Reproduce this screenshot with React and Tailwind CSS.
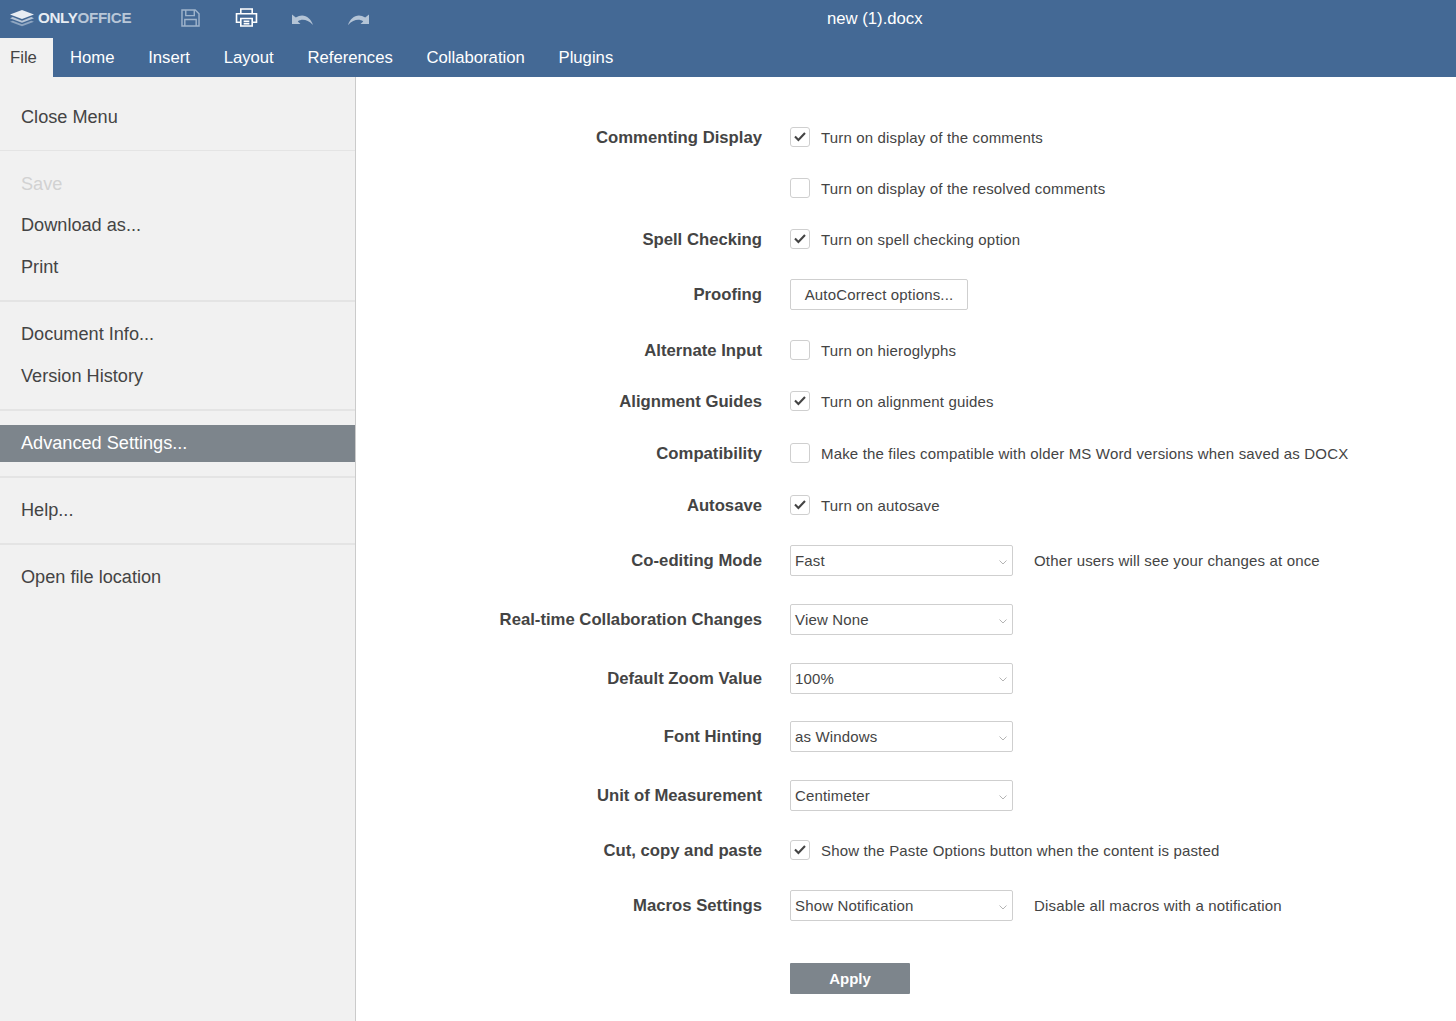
import React from 'react';

const font = { fontFamily: '"Liberation Sans", Arial, sans-serif' };

const tabs = ['Home', 'Insert', 'Layout', 'References', 'Collaboration', 'Plugins'];

const CheckBox = ({ checked }) => (
  <span className="mb-[1px] flex h-5 w-5 shrink-0 items-center justify-center rounded-[3px] border border-[#cfcfcf] bg-white">
    {checked && (
      <svg width="12" height="10" viewBox="0 0 12 10" fill="none">
        <path d="M1 4.6 L4.4 8 L11 1" stroke="#444444" strokeWidth="2.1" />
      </svg>
    )}
  </span>
);

const Check = ({ checked, text }) => (
  <div className="flex items-center gap-[11px]">
    <CheckBox checked={checked} />
    <span className="pt-[2px] text-[15px] tracking-[0.16px] text-[#444444]">{text}</span>
  </div>
);

const Select = ({ value, note }) => (
  <div className="flex items-center">
    <div className="flex h-[31px] w-[223px] items-center justify-between rounded-[2px] border border-[#cfcfcf] bg-white pl-[4px] pr-[5px]">
      <span className="pt-[2px] text-[15px] tracking-[0.16px] text-[#444444]">{value}</span>
      <svg width="8" height="5" viewBox="0 0 8 5" fill="none" className="mt-[3px]">
        <path d="M0.5 0.5 L4 4 L7.5 0.5" stroke="#b4b4b4" strokeWidth="1" />
      </svg>
    </div>
    {note && <span className="ml-[21px] pt-[2px] text-[15px] tracking-[0.16px] text-[#444444]">{note}</span>}
  </div>
);

const Row = ({ label, h, children }) => (
  <div className={`flex items-center ${h}`}>
    <div className="w-[406px] text-right text-[16.7px] leading-[25px] font-bold text-[#444444]">{label}</div>
    <div className="ml-[28px]">{children}</div>
  </div>
);

const MenuItem = ({ children, disabled, className = '' }) => (
  <div className={`flex h-[42px] items-center pl-[21px] pt-[2px] text-[18.15px] ${disabled ? 'text-[#d2d2d2]' : 'text-[#444444]'} ${className}`}>
    {children}
  </div>
);

const Divider = ({ thick }) => <div className={`bg-[#e4e4e4] ${thick ? 'h-[2px]' : 'h-px'}`} />;

export default function App() {
  return (
    <div className="flex h-[1021px] w-[1456px] flex-col overflow-hidden bg-white" style={font}>
      {/* header */}
      <div className="bg-[#446995] text-white">
        <div className="relative flex h-[38px] items-center">
          <svg width="24" height="18" viewBox="1 0 22 20" preserveAspectRatio="none" className="ml-[10px] mb-[2px]">
            <path d="M12 1 L23 6 L12 11 L1 6 Z" fill="#e8edf3" />
            <path d="M3.5 9 L12 13 L20.5 9 L23 10.2 L12 15.2 L1 10.2 Z" fill="#b9c7d8" />
            <path d="M3.5 13 L12 17 L20.5 13 L23 14.2 L12 19.2 L1 14.2 Z" fill="#8fa6c1" />
          </svg>
          <span className="ml-[4px] mb-[2px] text-[15.2px] font-bold tracking-[-0.33px]">
            <span className="text-[#e8edf3]">ONLY</span>
            <span className="text-[#b9c7d8]">OFFICE</span>
          </span>
          <svg width="19" height="18" viewBox="0 0 20 19" fill="none" className="ml-[50px] mb-[2px]" stroke="#9fb4cc" strokeWidth="1.5">
            <path d="M1 1 H15 L19 5 V18 H1 Z" />
            <path d="M5 1 V7 H14 V1" />
            <path d="M4 18 V11 H16 V18" />
          </svg>
          <svg width="23" height="19" viewBox="0 0 24 20" fill="none" className="ml-[35px] mb-[3px]" stroke="#ffffff" strokeWidth="1.7">
            <path d="M6 6 V1 H18 V6" />
            <path d="M6 15 H1.5 V6 H22.5 V15 H18" />
            <path d="M6 11 H18 V19 H6 Z" />
            <path d="M9 14 H15 M9 16.5 H15" />
          </svg>
          <svg width="21" height="11" viewBox="0 0 21 11" className="ml-[34px]">
            <path d="M0 0.5 L0 10 L8.5 10 L5.8 7.4 C10 4.6 15.5 5.5 21 11 C18.5 3 11 -1.5 3.8 3.6 Z" fill="#b4c4d6" />
          </svg>
          <svg width="21" height="11" viewBox="0 0 21 11" className="ml-[35px]">
            <path d="M21 0.5 L21 10 L12.5 10 L15.2 7.4 C11 4.6 5.5 5.5 0 11 C2.5 3 10 -1.5 17.2 3.6 Z" fill="#b4c4d6" />
          </svg>
          <div className="absolute left-[827px] top-0 flex h-[37px] items-center text-[16.7px]">new (1).docx</div>
        </div>
        <div className="flex h-[39px] text-[16.7px]">
          <div className="flex w-[53px] items-center bg-[#f1f1f1] pl-[10px] text-[#444444]">File</div>
          <div className="ml-[17px] flex items-center gap-[33.7px]">
            {tabs.map((t) => (
              <span key={t}>{t}</span>
            ))}
          </div>
        </div>
      </div>

      <div className="flex min-h-0 flex-1">
        {/* left menu */}
        <div className="w-[356px] shrink-0 border-r border-[#cbcbcb] bg-[#f1f1f1]">
          <div className="pt-[19px] pb-[12px]">
            <MenuItem>Close Menu</MenuItem>
          </div>
          <Divider />
          <div className="py-[12px]">
            <MenuItem disabled>Save</MenuItem>
            <MenuItem className="-mt-px">Download as...</MenuItem>
            <MenuItem>Print</MenuItem>
          </div>
          <Divider thick />
          <div className="pt-[11px] pb-[12px]">
            <MenuItem>Document Info...</MenuItem>
            <MenuItem>Version History</MenuItem>
          </div>
          <Divider thick />
          <div className="py-[14px]">
            <div className="flex h-[37px] items-center bg-[#7d858c] pl-[21px] text-[18.15px] text-white">Advanced Settings...</div>
          </div>
          <Divider thick />
          <div className="pt-[11px] pb-[12px]">
            <MenuItem>Help...</MenuItem>
          </div>
          <Divider thick />
          <div className="py-[11px]">
            <MenuItem>Open file location</MenuItem>
          </div>
        </div>

        {/* settings */}
        <div className="min-w-0 flex-1 pt-[35px]">
          <Row label="Commenting Display" h="h-[51px]"><Check checked text="Turn on display of the comments" /></Row>
          <Row h="h-[51px]"><Check text="Turn on display of the resolved comments" /></Row>
          <Row label="Spell Checking" h="h-[51px]"><Check checked text="Turn on spell checking option" /></Row>
          <Row label="Proofing" h="h-[59px]">
            <div className="flex h-[31px] w-[178px] items-center justify-center rounded-[2px] border border-[#cfcfcf] bg-white pt-[2px] text-[15px] tracking-[0.16px] text-[#444444]">
              AutoCorrect options...
            </div>
          </Row>
          <Row label="Alternate Input" h="h-[52px]"><Check text="Turn on hieroglyphs" /></Row>
          <Row label="Alignment Guides" h="h-[51px]"><Check checked text="Turn on alignment guides" /></Row>
          <Row label="Compatibility" h="h-[52px]"><Check text="Make the files compatible with older MS Word versions when saved as DOCX" /></Row>
          <Row label="Autosave" h="h-[52px]"><Check checked text="Turn on autosave" /></Row>
          <Row label="Co-editing Mode" h="h-[59px]"><Select value="Fast" note="Other users will see your changes at once" /></Row>
          <Row label="Real-time Collaboration Changes" h="h-[59px]"><Select value="View None" /></Row>
          <Row label="Default Zoom Value" h="h-[58px]"><Select value="100%" /></Row>
          <Row label="Font Hinting" h="h-[59px]"><Select value="as Windows" /></Row>
          <Row label="Unit of Measurement" h="h-[59px]"><Select value="Centimeter" /></Row>
          <Row label="Cut, copy and paste" h="h-[51px]"><Check checked text="Show the Paste Options button when the content is pasted" /></Row>
          <Row label="Macros Settings" h="h-[59px]"><Select value="Show Notification" note="Disable all macros with a notification" /></Row>
          <div className="ml-[434px] mt-[28px]">
            <div className="flex h-[31px] w-[120px] items-center justify-center rounded-[1px] bg-[#7d858c] pt-[2px] text-[15px] font-bold text-white">Apply</div>
          </div>
        </div>
      </div>
    </div>
  );
}
